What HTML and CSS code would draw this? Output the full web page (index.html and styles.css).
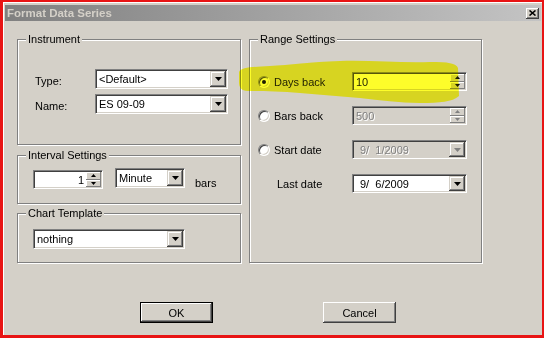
FILE: index.html
```html
<!DOCTYPE html>
<html lang="en">
<head>
  <meta charset="UTF-8">
  <meta name="viewport" content="width=device-width, initial-scale=1.0">
  <title>Format Data Series</title>
  <link rel="stylesheet" href="styles.css">
</head>
<body>
  <div class="window">
    <div class="titlebar">
      <span class="title">Format Data Series</span>
      <span class="close-btn">
        <svg width="7" height="6" viewBox="0 0 7 6"><path d="M0.5 0.5L6.5 5.5M6.5 0.5L0.5 5.5" stroke="#000" stroke-width="1.6"/></svg>
      </span>
    </div>

    <div class="dialog">
      <div class="columns">
        <div class="col-left">
          <div class="group group-instrument">
            <div class="group-title">Instrument</div>
            <div class="instrument-rows">
              <div class="field-row">
                <span class="field-label">Type:</span>
                <div class="combo combo-instrument">
                  <span class="combo-value">&lt;Default&gt;</span>
                  <span class="drop-btn"><svg width="7" height="4" viewBox="0 0 7 4"><path d="M0 0h7L3.5 4z"/></svg></span>
                </div>
              </div>
              <div class="field-row">
                <span class="field-label">Name:</span>
                <div class="combo combo-instrument">
                  <span class="combo-value">ES 09-09</span>
                  <span class="drop-btn"><svg width="7" height="4" viewBox="0 0 7 4"><path d="M0 0h7L3.5 4z"/></svg></span>
                </div>
              </div>
            </div>
          </div>

          <div class="group group-interval">
            <div class="group-title">Interval Settings</div>
            <div class="interval-row">
              <div class="spin spin-interval">
                <span class="spin-value spin-right">1</span>
                <span class="spin-btns">
                  <span class="spin-btn"><svg width="5" height="3" viewBox="0 0 5 3"><path d="M2.5 0L5 3H0z"/></svg></span>
                  <span class="spin-btn"><svg width="5" height="3" viewBox="0 0 5 3"><path d="M0 0h5L2.5 3z"/></svg></span>
                </span>
              </div>
              <div class="combo combo-minute">
                <span class="combo-value">Minute</span>
                <span class="drop-btn"><svg width="7" height="4" viewBox="0 0 7 4"><path d="M0 0h7L3.5 4z"/></svg></span>
              </div>
              <span class="bars-label">bars</span>
            </div>
          </div>

          <div class="group group-chart">
            <div class="group-title">Chart Template</div>
            <div class="chart-row">
              <div class="combo combo-chart">
                <span class="combo-value">nothing</span>
                <span class="drop-btn"><svg width="7" height="4" viewBox="0 0 7 4"><path d="M0 0h7L3.5 4z"/></svg></span>
              </div>
            </div>
          </div>
        </div>

        <div class="group group-range">
          <div class="group-title">Range Settings</div>
          <div class="range-rows">
            <div class="range-row">
              <span class="radio-label"><span class="radio checked"></span>Days back</span>
              <div class="spin spin-range">
                <span class="spin-value">10</span>
                <span class="spin-btns">
                  <span class="spin-btn"><svg width="5" height="3" viewBox="0 0 5 3"><path d="M2.5 0L5 3H0z"/></svg></span>
                  <span class="spin-btn"><svg width="5" height="3" viewBox="0 0 5 3"><path d="M0 0h5L2.5 3z"/></svg></span>
                </span>
              </div>
            </div>
            <div class="range-row">
              <span class="radio-label"><span class="radio"></span>Bars back</span>
              <div class="spin spin-range disabled">
                <span class="spin-value">500</span>
                <span class="spin-btns">
                  <span class="spin-btn"><svg width="5" height="3" viewBox="0 0 5 3"><path d="M2.5 0L5 3H0z"/></svg></span>
                  <span class="spin-btn"><svg width="5" height="3" viewBox="0 0 5 3"><path d="M0 0h5L2.5 3z"/></svg></span>
                </span>
              </div>
            </div>
            <div class="range-row">
              <span class="radio-label"><span class="radio"></span>Start date</span>
              <div class="combo combo-date disabled">
                <span class="combo-value date-value">9/  1/2009</span>
                <span class="drop-btn"><svg width="7" height="4" viewBox="0 0 7 4"><path d="M0 0h7L3.5 4z"/></svg></span>
              </div>
            </div>
            <div class="range-row">
              <span class="radio-label plain-label">Last date</span>
              <div class="combo combo-date">
                <span class="combo-value date-value">9/  6/2009</span>
                <span class="drop-btn"><svg width="7" height="4" viewBox="0 0 7 4"><path d="M0 0h7L3.5 4z"/></svg></span>
              </div>
            </div>
          </div>
        </div>
      </div>

      <div class="button-row">
        <button class="btn btn-default">OK</button>
        <button class="btn">Cancel</button>
      </div>
    </div>
  </div>

  <!-- highlighter mark drawn over the dialog: a multiply pass, then a light wash -->
  <svg class="highlight highlight-base" width="544" height="338" viewBox="0 0 544 338">
    <path d="M239 72C241 67 255 67 270 66C290 65 310 62 340 61C370 60 400 63 430 62C448 62 456 63 458 68L459 96C452 102 440 103 420 103C400 103 380 100 360 98C340 96 320 95 300 93C280 91 260 91 248 91C241 91 239 87 239 82Z"/>
  </svg>
  <svg class="highlight highlight-wash" width="544" height="338" viewBox="0 0 544 338">
    <path d="M239 72C241 67 255 67 270 66C290 65 310 62 340 61C370 60 400 63 430 62C448 62 456 63 458 68L459 96C452 102 440 103 420 103C400 103 380 100 360 98C340 96 320 95 300 93C280 91 260 91 248 91C241 91 239 87 239 82Z"/>
  </svg>
</body>
</html>
```

FILE: styles.css
```css
body {
  margin: 0;
  padding: 2px 2px 3px 3px;
  background-color: #e81414;
  font-family: "Liberation Sans", Arial, sans-serif;
  font-size: 11px;
  color: #000;
  box-sizing: border-box;
  width: 544px;
  height: 338px;
  overflow: hidden;
}
.window {
  height: 100%;
  box-sizing: border-box;
  background-color: #d4d0c8;
  border-top: 1px solid #fff;
  border-left: 1px solid #fff;
  padding: 2px 1px 0 1px;
}
.titlebar {
  height: 16px;
  display: flex;
  align-items: center;
  background: linear-gradient(to right, #808080, #c4c4c4);
  padding-left: 2px;
}
.title {
  color: #d4d0c8;
  font-weight: bold;
  font-size: 11.5px;
}
.close-btn {
  margin-left: auto;
  margin-right: 2px;
  width: 13px;
  height: 11px;
  display: flex;
  align-items: center;
  justify-content: center;
  background-color: #d4d0c8;
  box-shadow: inset -1px -1px #404040, inset 1px 1px #fff, inset -2px -2px #808080;
}
.dialog {
  padding: 18px 0 0 12px;
}
.columns {
  display: flex;
  gap: 8px;
}
.col-left {
  width: 224px;
  display: flex;
  flex-direction: column;
}
.group {
  box-sizing: border-box;
  border: 1px solid #808080;
  box-shadow: inset 1px 1px #fff, 1px 1px #fff;
}
.group-title {
  width: fit-content;
  margin: -7px 0 0 8px;
  padding: 0 2px;
  line-height: 12px;
  background-color: #d4d0c8;
}
.group-instrument {
  height: 106px;
}
.group-interval {
  height: 49px;
  margin-top: 10px;
}
.group-chart {
  height: 50px;
  margin-top: 9px;
}
.group-range {
  width: 233px;
  height: 224px;
}

/* instrument */
.instrument-rows {
  padding: 24px 0 0 17px;
  display: flex;
  flex-direction: column;
  gap: 3px;
}
.field-row {
  display: flex;
  align-items: flex-start;
}
.field-label {
  width: 60px;
  line-height: 20px;
  padding-top: 2px;
}

/* combos and spin edits */
.combo,
.spin {
  box-sizing: border-box;
  height: 20px;
  display: flex;
  align-items: center;
  background-color: #fff;
  border-top: 1px solid #808080;
  border-left: 1px solid #808080;
  border-bottom: 1px solid #fff;
  border-right: 1px solid #fff;
  box-shadow: inset 1px 1px #404040, inset -1px -1px #d4d0c8;
  padding: 1px;
}
.combo-value {
  padding-left: 2px;
  white-space: pre;
}
.drop-btn {
  margin-left: auto;
  width: 16px;
  height: 16px;
  box-sizing: border-box;
  display: flex;
  align-items: center;
  justify-content: center;
  background-color: #d4d0c8;
  box-shadow: inset -1px -1px #404040, inset 1px 1px #d4d0c8, inset -2px -2px #808080, inset 2px 2px #fff;
}
.combo-instrument {
  width: 133px;
}
.combo-minute {
  width: 70px;
  margin-left: 12px;
}
.combo-chart {
  width: 152px;
}
.combo-date {
  width: 115px;
  height: 19px;
}
.combo-date .drop-btn {
  height: 15px;
}
.date-value {
  padding-left: 6px;
}

.spin {
  height: 19px;
}
.spin-value {
  flex: 1;
  padding-left: 2px;
}
.spin-right {
  text-align: right;
  padding-right: 2px;
}
.spin-btns {
  width: 15px;
  height: 15px;
  display: flex;
  flex-direction: column;
}
.spin-btn {
  flex: 1;
  display: flex;
  align-items: center;
  justify-content: center;
  background-color: #d4d0c8;
  box-shadow: inset -1px -1px #808080, inset 1px 1px #fff;
}
.spin-interval {
  width: 70px;
  margin-top: 2px;
}
.spin-range {
  width: 115px;
}
.disabled {
  background-color: #d4d0c8;
}
.disabled .spin-value,
.disabled .combo-value {
  color: #808080;
  text-shadow: 1px 1px 0 #fff;
}
.disabled svg path {
  fill: #808080;
}

/* interval */
.interval-row {
  display: flex;
  align-items: flex-start;
  padding: 7px 0 0 15px;
}
.bars-label {
  margin: 5px 0 0 10px;
  line-height: 20px;
}

/* chart template */
.chart-row {
  padding: 10px 0 0 15px;
}

/* range settings */
.range-rows {
  padding: 27px 0 0 8px;
  display: flex;
  flex-direction: column;
  gap: 15px;
}
.range-row {
  display: flex;
  align-items: center;
}
.radio-label {
  width: 94px;
  display: flex;
  align-items: center;
}
.plain-label {
  box-sizing: border-box;
  padding-left: 19px;
}
.radio {
  width: 12px;
  height: 12px;
  box-sizing: border-box;
  margin-right: 4px;
  border-radius: 50%;
  background-color: #fff;
  border: 1px solid;
  border-color: #808080 #fff #fff #808080;
  box-shadow: inset 1px 1px #404040, inset -1px -1px #d4d0c8;
  display: flex;
  align-items: center;
  justify-content: center;
}
.radio.checked::after {
  content: "";
  width: 4px;
  height: 4px;
  border-radius: 50%;
  background-color: #000;
}

/* buttons */
.button-row {
  display: flex;
  gap: 110px;
  margin-top: 39px;
  padding-left: 123px;
}
.btn {
  width: 73px;
  height: 21px;
  padding: 0;
  border: none;
  font-family: "Liberation Sans", Arial, sans-serif;
  font-size: 11px;
  color: #000;
  background-color: #d4d0c8;
  box-shadow: inset -1px -1px #404040, inset 1px 1px #fff, inset -2px -2px #808080, inset 2px 2px #d4d0c8;
}
.btn-default {
  border: 1px solid #000;
  box-shadow: inset -1px -1px #404040, inset 1px 1px #fff, inset -2px -2px #808080;
}

.highlight {
  position: absolute;
  top: 0;
  left: 0;
  pointer-events: none;
}
.highlight-base {
  mix-blend-mode: multiply;
}
.highlight-base path {
  fill: #ffff30;
}
.highlight-wash {
  opacity: 0.12;
}
.highlight-wash path {
  fill: #f2f200;
}
```
